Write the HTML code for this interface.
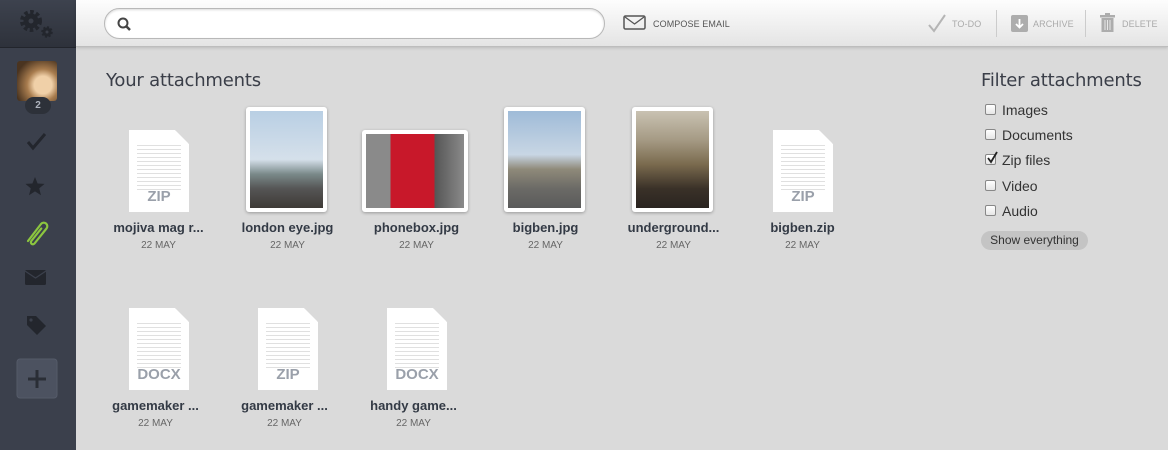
<!DOCTYPE html>
<html><head><meta charset="utf-8"><style>
*{margin:0;padding:0;box-sizing:border-box}
body{width:1168px;height:450px;overflow:hidden;background:#dadada;font-family:"Liberation Sans",Arial,sans-serif;position:relative}
#side{position:absolute;left:0;top:0;width:76px;height:450px;background:#3b404c}
#sidehead{position:absolute;left:0;top:0;width:76px;height:48px;background:linear-gradient(#3d424e,#2e323b);border-bottom:1px solid #22252c}
#top{position:absolute;left:76px;top:0;width:1092px;height:47px;background:linear-gradient(#fdfdfd,#e4e4e4);border-bottom:1px solid #bdbdbd;box-shadow:0 1px 3px rgba(0,0,0,.15)}
#search{position:absolute;left:28px;top:8px;width:501px;height:31px;border-radius:16px;background:#fff;border:1px solid #b8b8b8;box-shadow:inset 0 1px 2px rgba(0,0,0,.15)}
.tl{position:absolute;font-size:9px;color:#555;letter-spacing:.1px;top:19px}
.tl.dim{color:#aaa}
.sep{position:absolute;top:10px;width:1px;height:27px;background:#ccc}
h2{position:absolute;font-weight:normal;font-size:18px;color:#3a3e48;font-family:"DejaVu Sans",sans-serif;letter-spacing:-.2px}
.item{position:absolute;width:129px;text-align:center}
.cap{position:absolute;left:0;width:129px;text-align:center;font-weight:bold;font-size:13px;color:#333a45}
.date{position:absolute;left:0;width:129px;text-align:center;font-size:10px;color:#666}
.doc{position:absolute;width:60px;height:82px;background:#fff;box-shadow:0 1px 2px rgba(0,0,0,.25);clip-path:polygon(0 0,46px 0,60px 14px,60px 100%,0 100%)}
.doc .lines{position:absolute;left:8px;top:12px;width:44px;height:48px;background:repeating-linear-gradient(#fff 0 3px,#e0e0e0 3px 4px)}
.doc b{position:absolute;left:0;width:60px;top:58px;text-align:center;font-size:15px;color:#9aa0aa}
.ph{position:absolute;background:#fff;border-radius:3px;box-shadow:0 1px 3px rgba(0,0,0,.3);padding:4px}
.ph div{width:100%;height:100%}
.cb{position:absolute;left:985px;width:11px;height:11px;border:1px solid #888;border-radius:2px;background:linear-gradient(#fff,#e6e6e6)}
.fl{position:absolute;left:1002px;font-size:14px;color:#333}
</style></head><body>
<div id="side">
<div id="sidehead">
<svg width="76" height="48" style="position:absolute;left:0;top:0"><circle cx="31" cy="21" r="9" fill="none" stroke="#23262d" stroke-width="4" stroke-dasharray="3.5 2.4"/><circle cx="31" cy="21" r="7.5" fill="#23262d"/><circle cx="31" cy="21" r="2.5" fill="#3a3e48"/><circle cx="47" cy="32" r="4.5" fill="#23262d" stroke="#23262d" stroke-width="2.5" stroke-dasharray="2 1.5"/><circle cx="47" cy="32" r="1.5" fill="#3a3e48"/></svg>
</div>
<div style="position:absolute;left:17px;top:61px;width:40px;height:40px;border-radius:3px;background:radial-gradient(circle at 65% 60%,#f0d0a8 0 25%,#a87c4e 45%,#4a3420 80%)"></div>
<div style="position:absolute;left:25px;top:97px;width:26px;height:17px;border-radius:9px;background:#2d3139;color:#aeb3bd;font-size:10px;font-weight:bold;text-align:center;line-height:17px">2</div>
<svg width="76" height="450" style="position:absolute;left:0;top:0">
<path d="M28 142 l5 6 l12 -14" fill="none" stroke="#23262d" stroke-width="3"/>
<path d="M35 177 l2.6 6.5 7 .4 -5.4 4.5 1.8 6.8 -6 -3.8 -6 3.8 1.8 -6.8 -5.4 -4.5 7 -.4z" fill="#23262d"/>
<path d="M28 241 l13 -17 a3.5 3.5 0 0 1 5.5 4.5 l-12 15 a2 2 0 0 1 -3.2 -2.5 l10 -12.5" fill="none" stroke="#8cc63f" stroke-width="2.2" stroke-linecap="round"/>
<path d="M76 220 l10 10 l-10 10z" fill="#dadada"/>
<rect x="25" y="270" width="21" height="15" rx="1.5" fill="#23262d"/><path d="M25 271 l10.5 7 l10.5 -7" fill="none" stroke="#3b404c" stroke-width="1.3"/>
<path d="M27 316 h9 l10 10 l-9 9 l-10 -10z" fill="#23262d"/><circle cx="31" cy="320" r="1.6" fill="#3b404c"/>
<rect x="17" y="359" width="40" height="39" rx="3" fill="#4c5260" stroke="#555b69"/><path d="M37 370 v18 M28 379 h18" stroke="#2a2e36" stroke-width="3"/>
</svg>
</div>
<div id="top">
<div id="search"><svg width="20" height="20" style="position:absolute;left:10px;top:6px"><circle cx="8" cy="8" r="4.5" fill="none" stroke="#444" stroke-width="2"/><path d="M11 11 l4 4" stroke="#444" stroke-width="2.5"/></svg></div>
<svg width="24" height="16" style="position:absolute;left:547px;top:15px"><rect x="1" y="1" width="21" height="13" rx="1.5" fill="none" stroke="#555" stroke-width="1.5"/><path d="M2 2 l9.5 7 l9.5 -7" fill="none" stroke="#555" stroke-width="1.3"/></svg>
<div class="tl" style="left:577px">COMPOSE EMAIL</div>
<svg width="20" height="20" style="position:absolute;left:851px;top:13px"><path d="M2 12 l5 6 l11 -16" fill="none" stroke="#b5b5b5" stroke-width="2"/></svg>
<div class="tl dim" style="left:876px">TO-DO</div>
<div class="sep" style="left:920px"></div>
<svg width="18" height="18" style="position:absolute;left:935px;top:15px"><rect x="0" y="0" width="17" height="17" rx="2" fill="#adadad"/><path d="M8.5 4 v8 M5 9 l3.5 3.5 l3.5 -3.5" fill="none" stroke="#fff" stroke-width="1.8"/></svg>
<div class="tl dim" style="left:957px">ARCHIVE</div>
<div class="sep" style="left:1009px"></div>
<svg width="16" height="20" style="position:absolute;left:1024px;top:13px"><rect x="0" y="2" width="15" height="2.5" fill="#adadad"/><rect x="5" y="0" width="5" height="3" fill="#adadad"/><rect x="1.5" y="5" width="12" height="14" fill="#adadad"/><path d="M5 7 v10 M7.5 7 v10 M10 7 v10" stroke="#e8e8e8" stroke-width="1"/></svg>
<div class="tl dim" style="left:1046px">DELETE</div>
</div>
<h2 style="left:106px;top:70px">Your attachments</h2>
<h2 style="left:981px;top:70px">Filter attachments</h2>

<div class="doc" style="left:129px;top:130px"><div class="lines"></div><b>ZIP</b></div>
<div class="ph" style="left:246px;top:107px;width:81px;height:105px"><div style="background:linear-gradient(#b9cfe4 0%,#d5e0ea 50%,#7a8a8a 65%,#555 80%,#3e3a36 100%)"></div></div>
<div class="ph" style="left:362px;top:130px;width:106px;height:82px"><div style="background:linear-gradient(90deg,#8a8a8a 0 25%,#c8182a 25% 70%,#555 70%,#8a8a8a)"></div></div>
<div class="ph" style="left:504px;top:107px;width:81px;height:105px"><div style="background:linear-gradient(#9fbbd8 0%,#c8d6e4 45%,#8f8a7a 60%,#6b6a66 80%,#5a5a5a 100%)"></div></div>
<div class="ph" style="left:632px;top:107px;width:81px;height:105px"><div style="background:linear-gradient(#c9c2b2 0%,#a59a84 30%,#7a6a4e 55%,#3a3128 80%,#2a2420 100%)"></div></div>
<div class="doc" style="left:773px;top:130px"><div class="lines"></div><b>ZIP</b></div>

<div class="doc" style="left:129px;top:308px"><div class="lines"></div><b>DOCX</b></div>
<div class="doc" style="left:258px;top:308px"><div class="lines"></div><b>ZIP</b></div>
<div class="doc" style="left:387px;top:308px"><div class="lines"></div><b>DOCX</b></div>

<div class="item" style="left:94px;top:220px"><div class="cap">mojiva mag r...</div><div class="date" style="top:20px">22 MAY</div></div>
<div class="item" style="left:223px;top:220px"><div class="cap">london eye.jpg</div><div class="date" style="top:20px">22 MAY</div></div>
<div class="item" style="left:352px;top:220px"><div class="cap">phonebox.jpg</div><div class="date" style="top:20px">22 MAY</div></div>
<div class="item" style="left:481px;top:220px"><div class="cap">bigben.jpg</div><div class="date" style="top:20px">22 MAY</div></div>
<div class="item" style="left:609px;top:220px"><div class="cap">underground...</div><div class="date" style="top:20px">22 MAY</div></div>
<div class="item" style="left:738px;top:220px"><div class="cap">bigben.zip</div><div class="date" style="top:20px">22 MAY</div></div>
<div class="item" style="left:91px;top:398px"><div class="cap">gamemaker ...</div><div class="date" style="top:20px">22 MAY</div></div>
<div class="item" style="left:220px;top:398px"><div class="cap">gamemaker ...</div><div class="date" style="top:20px">22 MAY</div></div>
<div class="item" style="left:349px;top:398px"><div class="cap">handy game...</div><div class="date" style="top:20px">22 MAY</div></div>

<div class="cb" style="top:104px"></div><div class="fl" style="top:102px">Images</div>
<div class="cb" style="top:129px"></div><div class="fl" style="top:127px">Documents</div>
<div class="cb" style="top:154px"></div><svg width="14" height="14" style="position:absolute;left:985px;top:151px"><path d="M3 7 l3 4 l6 -10" fill="none" stroke="#222" stroke-width="1.8"/></svg><div class="fl" style="top:152px">Zip files</div>
<div class="cb" style="top:180px"></div><div class="fl" style="top:178px">Video</div>
<div class="cb" style="top:205px"></div><div class="fl" style="top:203px">Audio</div>
<div style="position:absolute;left:981px;top:231px;width:107px;height:19px;border-radius:10px;background:#c4c4c4;font-size:12px;color:#333;text-align:center;line-height:19px">Show everything</div>
</body></html>
